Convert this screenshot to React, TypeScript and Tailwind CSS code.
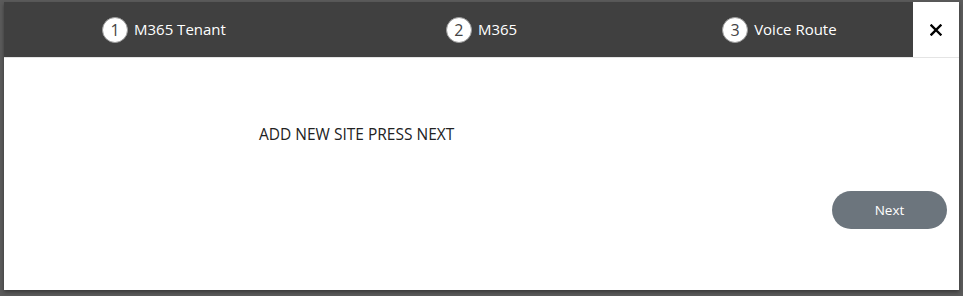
const steps = [
  { n: 1, label: "M365 Tenant", gap: "ml-[98px]" },
  { n: 2, label: "M365", gap: "ml-[220px]" },
  { n: 3, label: "Voice Route", gap: "ml-[205px]" },
];

export default function App() {
  return (
    <div className="w-[963px] h-[296px] bg-[#5b5b5b] pt-[2px] pl-[4px] font-['Open_Sans',sans-serif]">
      <div className="w-[955px] h-[288px] bg-white flex flex-col shadow-[0_2px_4px_rgba(0,0,0,0.4)]">
        {/* Step header */}
        <div className="h-[56px] flex items-stretch border-b border-[#e4e4e4]">
          <div className="flex-1 bg-[#404040] flex items-center">
            {steps.map((s) => (
              <div key={s.n} className={`${s.gap} flex items-center gap-[6px]`}>
                <span className="w-[26px] h-[26px] rounded-full bg-white border border-[#9a9a9a] flex items-center justify-center text-[16px] text-[#444] leading-none">
                  {s.n}
                </span>
                <span className="text-white text-[15px] leading-none">{s.label}</span>
              </div>
            ))}
          </div>
          <button className="w-[46px] bg-white flex items-center justify-center text-black">
            <svg width="12" height="12" viewBox="0 0 12 12">
              <path d="M1.5 1.5 L10.5 10.5 M10.5 1.5 L1.5 10.5" stroke="black" strokeWidth="2.4" strokeLinecap="square" />
            </svg>
          </button>
        </div>

        {/* Body */}
        <div className="flex-1 flex flex-col">
          <p className="mt-[65px] ml-[255px] text-[15.5px] text-[#222]">ADD NEW SITE PRESS NEXT</p>
          <div className="flex justify-end mt-[45px] pr-[12px]">
            <button className="w-[115px] h-[38px] rounded-full bg-[#6c757d] text-white text-[13.5px]">
              Next
            </button>
          </div>
        </div>
      </div>
    </div>
  );
}
